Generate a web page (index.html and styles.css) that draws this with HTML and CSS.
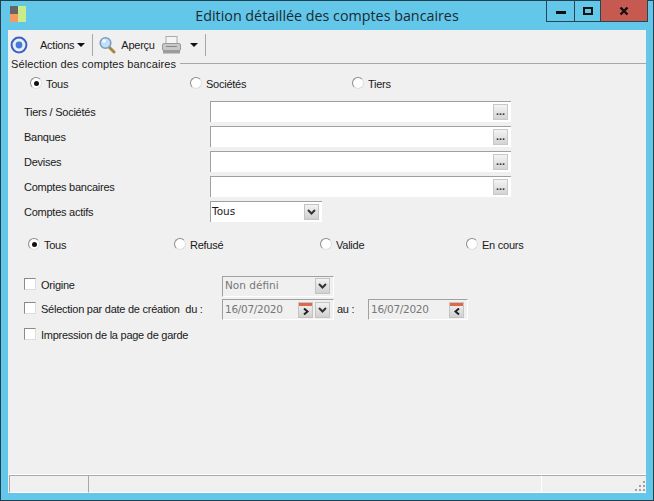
FILE: index.html
```html
<!DOCTYPE html>
<html lang="fr">
<head>
<meta charset="utf-8">
<title>Edition détaillée des comptes bancaires</title>
<link rel="stylesheet" href="styles.css">
</head>
<body>
<div class="window">
  <header class="titlebar">
    <svg class="appicon" width="16" height="16" viewBox="0 0 16 16"><rect x="0" y="0" width="8" height="8" fill="#666"/><rect x="0" y="8" width="8" height="8" fill="#f59a5c"/><rect x="8" y="0" width="8" height="16" fill="#c8ec8c"/></svg>
    <div class="title">Edition détaillée des comptes bancaires</div>
    <div class="winbtns">
      <div class="winbtn min"><span class="minbar"></span></div>
      <div class="winbtn max"><span class="maxbox"></span></div>
      <div class="winbtn close"><svg width="10" height="10" viewBox="0 0 10 10"><path d="M1.5 1.5L8.5 8.5M8.5 1.5L1.5 8.5" stroke="#111" stroke-width="2.4"/></svg></div>
    </div>
  </header>
  <div class="client">
    <div class="toolbar">
      <svg class="tb-target" width="18" height="18" viewBox="0 0 18 18"><circle cx="9" cy="9" r="7.4" fill="#e8eefa" stroke="#3a62c4" stroke-width="2"/><circle cx="9" cy="9" r="3.4" fill="#4a78d8"/></svg>
      <span class="tb-actions">Actions</span><span class="caret tb-caret1"></span>
      <span class="tb-sep sep1"></span>
      <svg class="tb-loupe" width="17" height="18" viewBox="0 0 17 18"><path d="M10 11L15 16" stroke="#a8843c" stroke-width="3" stroke-linecap="round"/><circle cx="6.5" cy="7" r="5.3" fill="#bfe0fa" stroke="#7f9cc0" stroke-width="1.6"/><circle cx="5" cy="5" r="1.8" fill="#fff"/></svg>
      <span class="tb-apercu">Aperçu</span>
      <svg class="tb-print" width="19" height="18" viewBox="0 0 19 18"><rect x="4" y="0.5" width="11" height="7" fill="#f5f5f5" stroke="#aaa"/><rect x="0.5" y="7.5" width="18" height="7" rx="1.5" fill="#c8c8c8" stroke="#999"/><rect x="1" y="14" width="17" height="3.5" fill="#9c9c9c"/><rect x="4" y="10" width="11" height="1" fill="#888"/></svg>
      <span class="caret tb-caret2"></span>
      <span class="tb-sep sep2"></span>
    </div>
    <div class="legend"><span class="legend-text">Sélection des comptes bancaires</span><span class="legend-line"></span></div>
    <div class="radios top">
      <label class="radio r-a"><span class="rb on"></span>Tous</label>
      <label class="radio r-b"><span class="rb"></span>Sociétés</label>
      <label class="radio r-c"><span class="rb"></span>Tiers</label>
    </div>
    <div class="fields">
      <div class="field"><span class="flabel">Tiers / Sociétés</span><div class="input"><span class="dots">...</span></div></div>
      <div class="field"><span class="flabel">Banques</span><div class="input"><span class="dots">...</span></div></div>
      <div class="field"><span class="flabel">Devises</span><div class="input"><span class="dots">...</span></div></div>
      <div class="field"><span class="flabel">Comptes bancaires</span><div class="input"><span class="dots">...</span></div></div>
      <div class="field"><span class="flabel">Comptes actifs</span><div class="combo"><span class="ctext">Tous</span><span class="cbtn"><svg width="9" height="6" viewBox="0 0 9 6"><path d="M1 1L4.500 4.500L8 1" fill="none" stroke="#333" stroke-width="2"/></svg></span></div></div>
    </div>
    <div class="radios second">
      <label class="radio s-a"><span class="rb on"></span>Tous</label>
      <label class="radio s-b"><span class="rb"></span>Refusé</label>
      <label class="radio s-c"><span class="rb"></span>Valide</label>
      <label class="radio s-d"><span class="rb"></span>En cours</label>
    </div>
    <div class="opts">
      <div class="opt">
        <label class="check"><span class="cb"></span>Origine</label>
        <div class="combo off c-origine"><span class="ctext">Non défini</span><span class="cbtn"><svg width="9" height="6" viewBox="0 0 9 6"><path d="M1 1L4.500 4.500L8 1" fill="none" stroke="#333" stroke-width="2"/></svg></span></div>
      </div>
      <div class="opt">
        <label class="check"><span class="cb"></span>Sélection par date de création&nbsp; du :</label>
        <div class="combo off c-date1"><span class="ctext date">16/07/2020</span><span class="calbtn"><i class="calhead"></i><svg width="8" height="7" viewBox="0 0 8 7"><path d="M2 0.500L5.500 3.500L2 6.500" fill="none" stroke="#222" stroke-width="2"/></svg></span><span class="cbtn"><svg width="9" height="6" viewBox="0 0 9 6"><path d="M1 1L4.500 4.500L8 1" fill="none" stroke="#333" stroke-width="2"/></svg></span></div>
        <span class="au">au :</span>
        <div class="combo off c-date2"><span class="ctext date">16/07/2020</span><span class="calbtn"><i class="calhead"></i><svg width="8" height="7" viewBox="0 0 8 7"><path d="M6 0.500L2.500 3.500L6 6.500" fill="none" stroke="#222" stroke-width="2"/></svg></span></div>
      </div>
      <div class="opt short">
        <label class="check"><span class="cb"></span>Impression de la page de garde</label>
      </div>
    </div>
    <footer class="statusbar">
      <div class="pane p1"></div>
      <div class="pane p2"></div>
      <div class="pane p3"><svg width="12" height="12" viewBox="0 0 12 12" fill="#a0a0a0"><rect x="9" y="1" width="2" height="2"/><rect x="5" y="5" width="2" height="2"/><rect x="9" y="5" width="2" height="2"/><rect x="1" y="9" width="2" height="2"/><rect x="5" y="9" width="2" height="2"/><rect x="9" y="9" width="2" height="2"/></svg></div>
    </footer>
  </div>
</div>
</body>
</html>
```
FILE: styles.css
```css
* { box-sizing: border-box; }
html, body { margin: 0; padding: 0; }
body { width: 654px; height: 501px; overflow: hidden; font-family: "Liberation Sans", Arial, sans-serif; font-size: 11px; letter-spacing: -.25px; color: #1a1a1a; }
.window { width: 654px; height: 501px; background: #63c7ea; border: 1px solid #24404e; display: flex; flex-direction: column; }
.titlebar { height: 29px; flex: none; position: relative; display: flex; align-items: center; }
.appicon { margin: 0 0 4px 9px; flex: none; }
.title { position: absolute; left: 0; right: 0; top: 5px; text-align: center; font-family: "Open Sans", sans-serif; font-size: 14.3px; letter-spacing: 0; line-height: 20px; color: #1a2a33; }
.winbtns { position: absolute; right: 5px; top: -1px; height: 22px; display: flex; border: 1px solid #2a4552; border-top: 0; }
.winbtn { height: 21px; display: flex; align-items: center; justify-content: center; }
.min { width: 28px; border-right: 1px solid #2a4552; }
.max { width: 26px; border-right: 1px solid #2a4552; }
.close { width: 46px; background: #c75a50; }
.minbar { width: 10px; height: 3px; background: #111; margin-top: 3px; }
.maxbox { width: 10px; height: 8px; border: 2px solid #111; }
.client { flex: 1; margin: 0 7px 7px; background: #f0f0f0; display: flex; flex-direction: column; min-height: 0; }
.toolbar { height: 33px; padding-bottom: 4px; flex: none; display: flex; align-items: center; }
.tb-target { margin-left: 2px; flex: none; }
.tb-actions { margin-left: 12px; }
.caret { width: 0; height: 0; border-left: 4px solid transparent; border-right: 4px solid transparent; border-top: 4px solid #111; margin-top: 1px; }
.tb-caret1 { margin-left: 3px; }
.tb-sep { width: 1px; height: 22px; background: #a8a8a8; }
.sep1 { margin-left: 7px; }
.tb-loupe { margin-left: 6px; flex: none; }
.tb-apercu { margin-left: 5px; }
.tb-print { margin-left: 7px; flex: none; }
.tb-caret2 { margin-left: 9px; }
.sep2 { margin-left: 7px; }
.legend { height: 12px; display: flex; align-items: flex-start; margin-top: -5px; padding-left: 3px; flex: none; }
.legend-text { font-size: 11px; line-height: 12px; letter-spacing: .12px; }
.legend-line { flex: 1; height: 1px; background: #a8a8a8; margin: 5px 0 0 4px; }
.radios { display: flex; align-items: center; flex: none; }
.radios.top { height: 20px; margin-top: 4px; }
.radios.second { height: 20px; margin-top: 13px; }
.radio { display: flex; align-items: center; line-height: 14px; }
.rb { width: 12px; height: 12px; border-radius: 50%; background: #fff; border: 1px solid #8a8a8a; border-right-color: #ddd; border-bottom-color: #ddd; margin-right: 4px; margin-top: -2px; display: flex; align-items: center; justify-content: center; }
.rb.on::after { content: ""; width: 5px; height: 5px; border-radius: 50%; background: #111; }
.r-a { margin-left: 22px; width: 160px; }
.r-b { width: 162px; }
.s-a { margin-left: 20px; width: 146px; }
.s-b { width: 146px; }
.s-c { width: 146px; }
.fields { margin-top: 7px; display: flex; flex-direction: column; gap: 4px; flex: none; }
.field { height: 21px; display: flex; align-items: center; }
.flabel { width: 186px; margin-left: 16px; flex: none; }
.input { width: 301px; height: 21px; background: #fff; border-top: 1px solid #a0a0a0; border-left: 1px solid #a0a0a0; display: flex; align-items: center; justify-content: flex-end; padding-right: 3px; }
.dots { width: 15px; height: 16px; background: linear-gradient(#f4f4f4, #d4d4d4); border: 1px solid #c8c8c8; font-weight: bold; font-size: 11px; letter-spacing: 0; line-height: 13px; text-align: center; color: #333; }
.combo { height: 21px; background: #fff; border-top: 1px solid #a0a0a0; border-left: 1px solid #a0a0a0; display: flex; align-items: center; width: 112px; }
.ctext { flex: 1; padding-left: 1px; font-family: "DejaVu Sans", sans-serif; font-size: 10.5px; letter-spacing: 0; line-height: 14px; margin-top: -2px; }
.ctext.date { letter-spacing: -.3px; }
.cbtn { width: 15px; height: 16px; margin-right: 3px; background: linear-gradient(#f2f2f2, #d0d0d0); border: 1px solid #c4c4c4; display: flex; align-items: center; justify-content: center; flex: none; }
.combo.off { background: #f0f0f0; border-right: 1px solid #fff; border-bottom: 1px solid #fff; }
.off .ctext { color: #777; padding-left: 2px; }
.c-origine { margin-top: 2px; }
.c-date1, .c-date2 { margin-top: 1px; }
.calbtn { width: 15px; height: 16px; margin-right: 2px; background: linear-gradient(#f2f2f2, #d0d0d0); border: 1px solid #c4c4c4; display: flex; flex-direction: column; align-items: center; flex: none; overflow: hidden; }
.calhead { display: block; width: 100%; height: 3px; background: #e0674a; margin-bottom: 2px; flex: none; }
.opts { margin-top: 20px; flex: none; display: flex; flex-direction: column; gap: 4px; }
.opt { height: 20px; display: flex; align-items: center; padding-left: 16px; }
.opt.short { height: 20px; margin-top: 2px; }
.check { display: flex; align-items: center; width: 198px; flex: none; white-space: nowrap; }
.cb { width: 12px; height: 12px; background: #fff; border: 1px solid #8a8a8a; border-right-color: #ddd; border-bottom-color: #ddd; margin-right: 5px; margin-top: -2px; flex: none; }
.au { margin-left: 3px; width: 31px; flex: none; }
.c-date2 { width: 100px; }
.c-date2 .calbtn { margin-right: 3px; }
.statusbar { margin-top: auto; height: 19px; flex: none; display: flex; border-top: 1px solid #fff; }
.pane { border-top: 1px solid #a8a8a8; border-bottom: 1px solid #fff; height: 18px; }
.p1 { width: 80px; margin-left: 1px; border-left: 1px solid #a8a8a8; border-right: 1px solid #a8a8a8; }
.p2 { width: 453px; border-right: 1px solid #fff; }
.p3 { flex: 1; display: flex; align-items: flex-end; justify-content: flex-end; }
```
